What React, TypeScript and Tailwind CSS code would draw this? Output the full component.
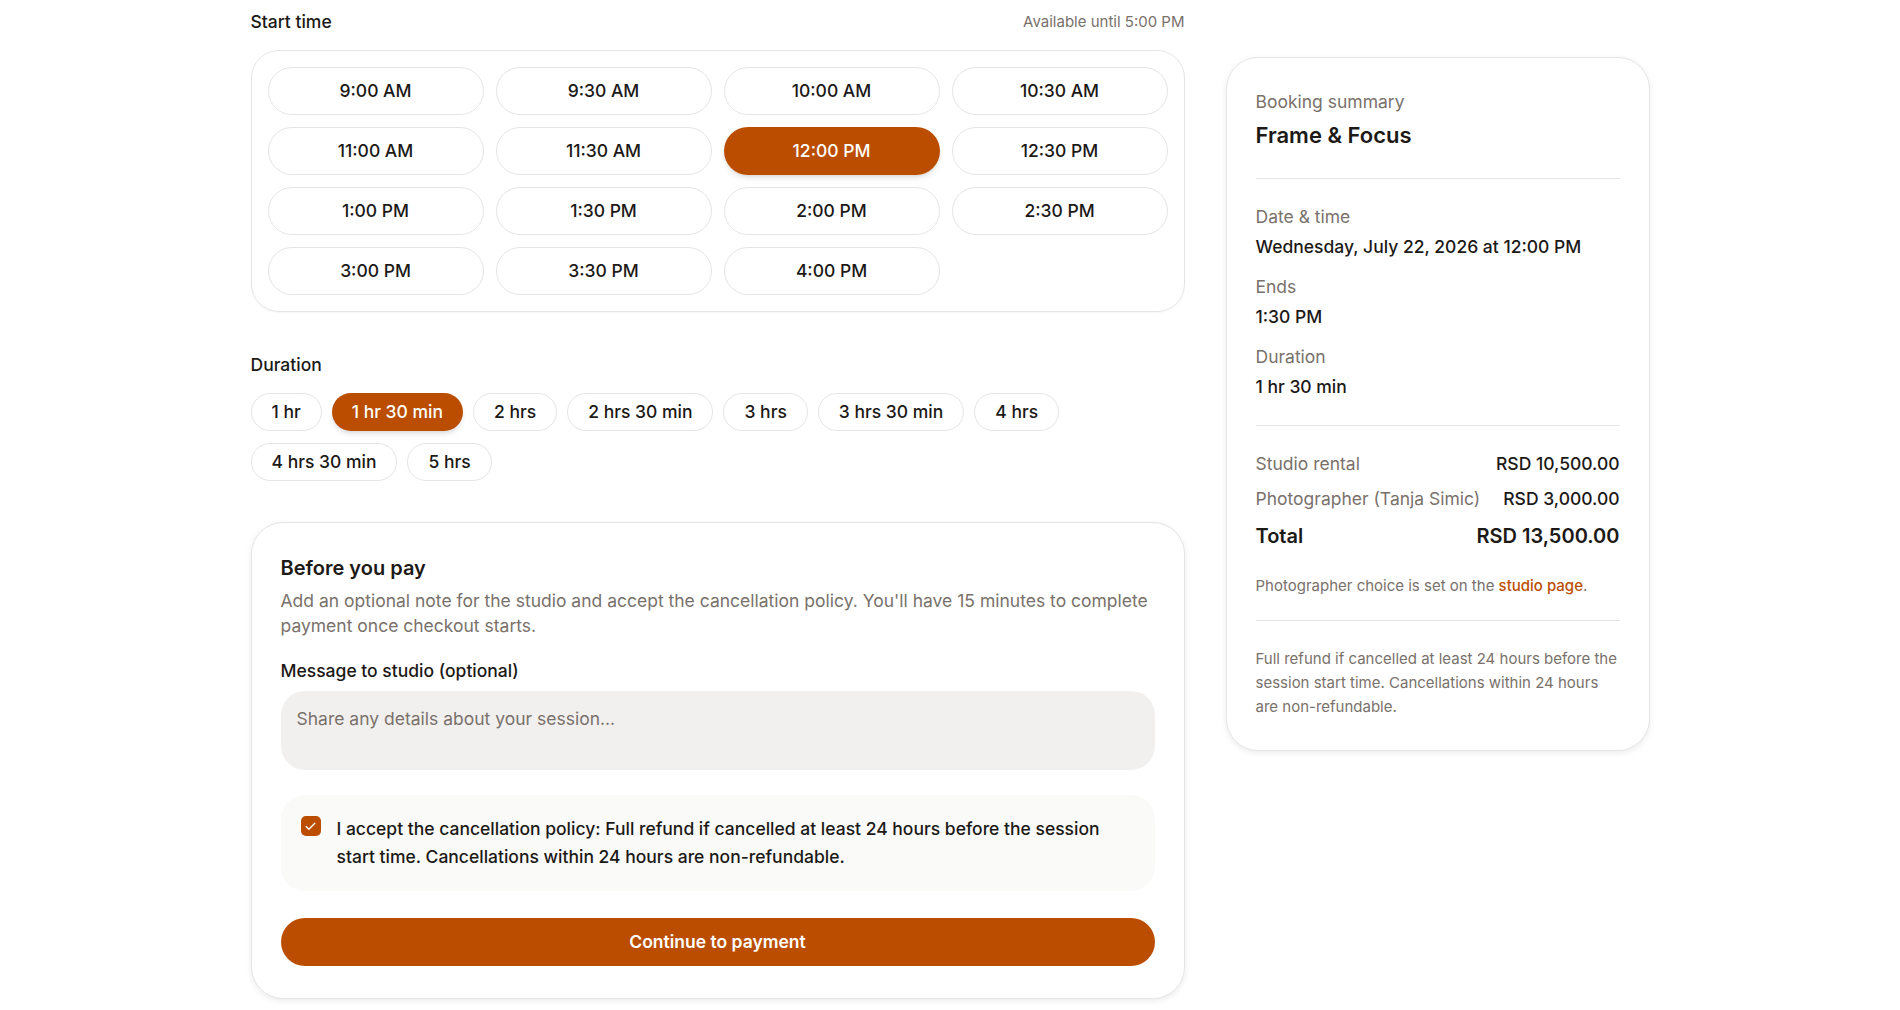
import { useState } from 'react'
import { Check } from 'lucide-react'

const slots = [
  '9:00 AM', '9:30 AM', '10:00 AM', '10:30 AM',
  '11:00 AM', '11:30 AM', '12:00 PM', '12:30 PM',
  '1:00 PM', '1:30 PM', '2:00 PM', '2:30 PM',
  '3:00 PM', '3:30 PM', '4:00 PM',
]

const durations = ['1 hr', '1 hr 30 min', '2 hrs', '2 hrs 30 min', '3 hrs', '3 hrs 30 min', '4 hrs', '4 hrs 30 min', '5 hrs']

const App = () => {
  const [slot, setSlot] = useState('12:00 PM')
  const [duration, setDuration] = useState('1 hr 30 min')
  const [accepted, setAccepted] = useState(true)

  return (
    <div className="min-h-screen bg-white font-['Inter',sans-serif] text-stone-900">
      <div className="mx-auto grid w-[1399px] grid-cols-[934px_424px] gap-[41px] pt-[10px] pb-10">
        {/* Left column */}
        <div>
          {/* Start time */}
          <div className="mb-4 flex items-center justify-between">
            <h3 className="text-[17.5px] leading-6 font-medium">Start time</h3>
            <span className="text-[15px] text-stone-500">Available until 5:00 PM</span>
          </div>
          <div className="grid grid-cols-4 gap-3 rounded-[28px] border border-stone-200 p-4 shadow-[0_1px_2px_rgba(0,0,0,0.04)]">
            {slots.map((s) => (
              <button
                key={s}
                onClick={() => setSlot(s)}
                className={
                  s === slot
                    ? 'h-12 rounded-full bg-amber-700 text-[17.5px] font-medium text-white shadow-md'
                    : 'h-12 rounded-full border border-stone-200 bg-white text-[17.5px] font-medium text-stone-900'
                }
              >
                {s}
              </button>
            ))}
          </div>

          {/* Duration */}
          <h3 className="mt-[41px] mb-4 text-[17.5px] leading-6 font-medium">Duration</h3>
          <div className="flex flex-wrap gap-x-2.5 gap-y-3">
            {durations.map((d) => (
              <button
                key={d}
                onClick={() => setDuration(d)}
                className={
                  d === duration
                    ? 'h-[38px] rounded-full bg-amber-700 px-5 text-[17.5px] font-medium text-white shadow-md'
                    : 'h-[38px] rounded-full border border-stone-200 bg-white px-5 text-[17.5px] font-medium text-stone-900'
                }
              >
                {d}
              </button>
            ))}
          </div>

          {/* Before you pay */}
          <div className="mt-[41px] rounded-[32px] border border-stone-200 bg-white px-[29px] pt-[31px] pb-8 shadow-[0_2px_6px_rgba(0,0,0,0.08)]">
            <h2 className="text-[20px] leading-7 font-semibold">Before you pay</h2>
            <p className="mt-1.5 text-[17.5px] leading-[25px] text-stone-500">
              Add an optional note for the studio and accept the cancellation policy. You'll have 15 minutes to complete
              payment once checkout starts.
            </p>

            <label className="mt-[21px] block text-[17.5px] leading-6 font-medium">Message to studio (optional)</label>
            <textarea
              placeholder="Share any details about your session..."
              className="mt-2 block h-[79px] w-full resize-none rounded-3xl bg-[#f2f0ef] px-4 pt-4 text-[17.5px] leading-6 text-stone-900 outline-none placeholder:text-stone-500"
            />

            <div className="mt-[25px] flex items-start gap-4 rounded-3xl bg-stone-50 p-5">
              <button
                onClick={() => setAccepted(!accepted)}
                className={
                  accepted
                    ? 'mt-px flex size-5 shrink-0 items-center justify-center rounded-[5px] bg-amber-700'
                    : 'mt-px flex size-5 shrink-0 items-center justify-center rounded-[5px] border border-stone-300 bg-white'
                }
              >
                {accepted && <Check size={13} strokeWidth={2.5} className="text-white" />}
              </button>
              <p className="text-[17.5px] leading-7 font-medium">
                I accept the cancellation policy: Full refund if cancelled at least 24 hours before the session start
                time. Cancellations within 24 hours are non-refundable.
              </p>
            </div>

            <button className="mt-[27px] h-12 w-full rounded-full bg-amber-700 text-[17.5px] font-semibold text-white">
              Continue to payment
            </button>
          </div>
        </div>

        {/* Booking summary */}
        <div>
          <div className="mt-[47px] rounded-[32px] border border-stone-200 bg-white px-[29px] pt-8 pb-[31px] shadow-[0_2px_6px_rgba(0,0,0,0.08)]">
            <div className="border-b border-stone-200 pb-7">
              <div className="text-[17.5px] leading-6 text-stone-500">Booking summary</div>
              <div className="mt-1.5 text-[22px] leading-[30px] font-semibold">Frame &amp; Focus</div>
            </div>

            <div className="space-y-4 border-b border-stone-200 pt-[26px] pb-[26px]">
              <div>
                <div className="text-[17.5px] leading-6 text-stone-500">Date &amp; time</div>
                <div className="mt-1.5 text-[17.5px] leading-6 font-medium">Wednesday, July 22, 2026 at 12:00 PM</div>
              </div>
              <div>
                <div className="text-[17.5px] leading-6 text-stone-500">Ends</div>
                <div className="mt-1.5 text-[17.5px] leading-6 font-medium">1:30 PM</div>
              </div>
              <div>
                <div className="text-[17.5px] leading-6 text-stone-500">Duration</div>
                <div className="mt-1.5 text-[17.5px] leading-6 font-medium">1 hr 30 min</div>
              </div>
            </div>

            <div className="border-b border-stone-200 pt-[26px] pb-6">
              <div className="space-y-[11px]">
                <div className="flex items-center justify-between text-[17.5px] leading-6">
                  <span className="text-stone-500">Studio rental</span>
                  <span className="font-medium">RSD 10,500.00</span>
                </div>
                <div className="flex items-center justify-between text-[17.5px] leading-6">
                  <span className="text-stone-500">Photographer (Tanja Simic)</span>
                  <span className="font-medium">RSD 3,000.00</span>
                </div>
                <div className="flex items-center justify-between text-[20px] leading-7 font-semibold">
                  <span>Total</span>
                  <span>RSD 13,500.00</span>
                </div>
              </div>
              <p className="mt-[26px] text-[15px] leading-5 text-stone-500">
                Photographer choice is set on the{' '}
                <a href="#" className="font-medium text-amber-700">
                  studio page
                </a>
                .
              </p>
            </div>

            <p className="pt-[26px] text-[15px] leading-6 text-stone-500">
              Full refund if cancelled at least 24 hours before the session start time. Cancellations within 24 hours
              are non-refundable.
            </p>
          </div>
        </div>
      </div>
    </div>
  )
}

export default App
